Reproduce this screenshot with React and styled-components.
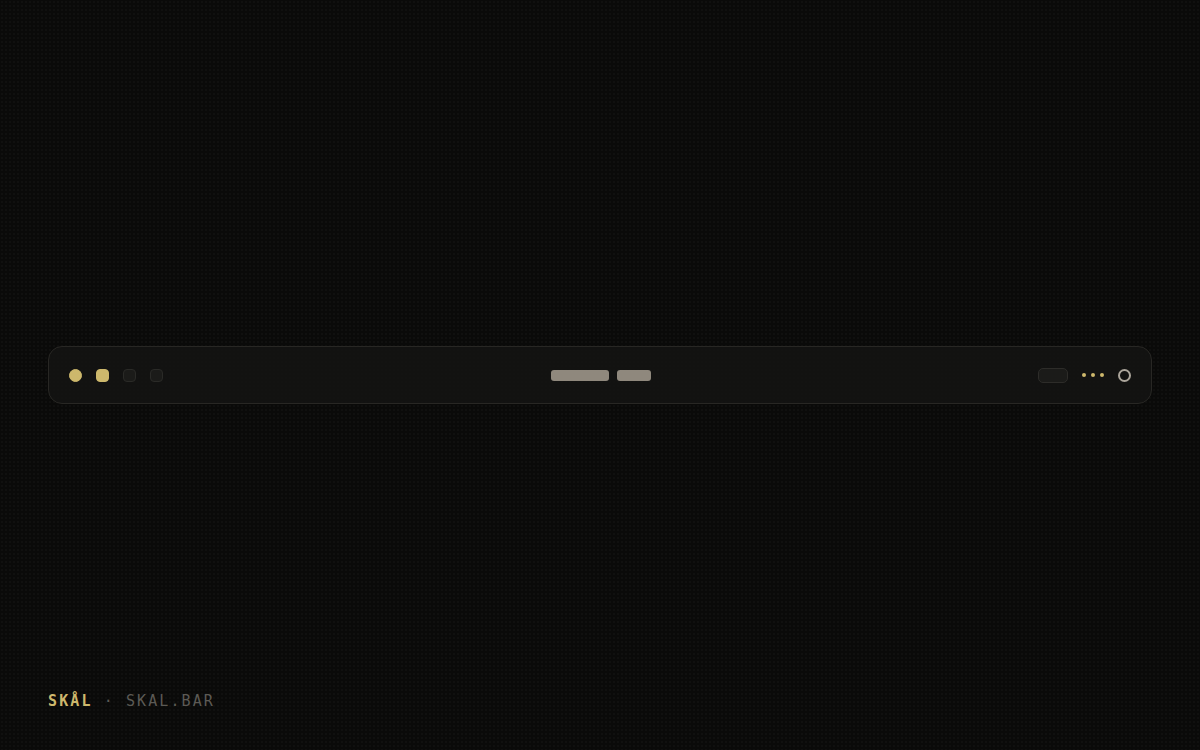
import styled, { createGlobalStyle } from "styled-components";

const GlobalStyle = createGlobalStyle`
  html, body {
    margin: 0;
    padding: 0;
    height: 100%;
    background: #0a0a09;
  }
  #root {
    height: 100%;
  }
`;

const Page = styled.div`
  box-sizing: border-box;
  width: 100%;
  height: 750px;
  padding: 0 48px 40px;
  display: flex;
  flex-direction: column;
  background-color: #0a0a09;
  background-image: radial-gradient(rgba(255, 255, 255, 0.05) 0.6px, transparent 0.8px);
  background-size: 4px 4px;
`;

const Stage = styled.div`
  flex: 1;
  display: flex;
  align-items: center;
  padding-top: 57px;
`;

const Bar = styled.div`
  box-sizing: border-box;
  width: 100%;
  height: 58px;
  padding: 1px 20px 0;
  display: grid;
  grid-template-columns: 1fr auto 1fr;
  align-items: center;
  background: rgba(20, 20, 18, 0.92);
  border: 1px solid #282724;
  border-radius: 14px;
`;

const Group = styled.div`
  display: flex;
  align-items: center;
  gap: ${(p) => p.gap || "14px"};
  justify-content: ${(p) => p.justify || "flex-start"};
`;

const Dot = styled.span`
  box-sizing: border-box;
  width: 13px;
  height: 13px;
  border-radius: ${(p) => (p.round ? "50%" : "4px")};
  background: ${(p) => (p.active ? "#cdb86c" : "#1b1b19")};
  border: 1px solid ${(p) => (p.active ? "#cdb86c" : "#2a2a27")};
`;

const Pill = styled.span`
  width: ${(p) => p.w}px;
  height: 11px;
  border-radius: 3px;
  background: #8f887d;
`;

const Center = styled(Group)`
  margin-left: 2px;
`;

const Chip = styled.span`
  box-sizing: border-box;
  width: 30px;
  height: 15px;
  border-radius: 5px;
  background: #1b1b19;
  border: 1px solid #2d2c29;
`;

const Dots = styled.span`
  display: flex;
  gap: 5px;
  & > i {
    width: 4px;
    height: 4px;
    border-radius: 50%;
    background: #cdb86c;
  }
`;

const Ring = styled.span`
  box-sizing: border-box;
  width: 13px;
  height: 13px;
  border-radius: 50%;
  border: 2px solid #aba59b;
`;

const Footer = styled.div`
  font-family: "DejaVu Sans Mono", "Liberation Mono", monospace;
  font-size: 15px;
  letter-spacing: 2.1px;
  color: #5c5a55;
  white-space: pre;
`;

const Brand = styled.span`
  color: #cdb86c;
  font-weight: 700;
`;

export default function App() {
  return (
    <>
      <GlobalStyle />
      <Page>
        <Stage>
          <Bar>
            <Group>
              <Dot round active />
              <Dot active />
              <Dot />
              <Dot />
            </Group>
            <Center gap="8px">
              <Pill w={58} />
              <Pill w={34} />
            </Center>
            <Group justify="flex-end" gap="14px">
              <Chip />
              <Dots>
                <i />
                <i />
                <i />
              </Dots>
              <Ring />
            </Group>
          </Bar>
        </Stage>
        <Footer>
          <Brand>SKÅL</Brand> · SKAL.BAR
        </Footer>
      </Page>
    </>
  );
}
